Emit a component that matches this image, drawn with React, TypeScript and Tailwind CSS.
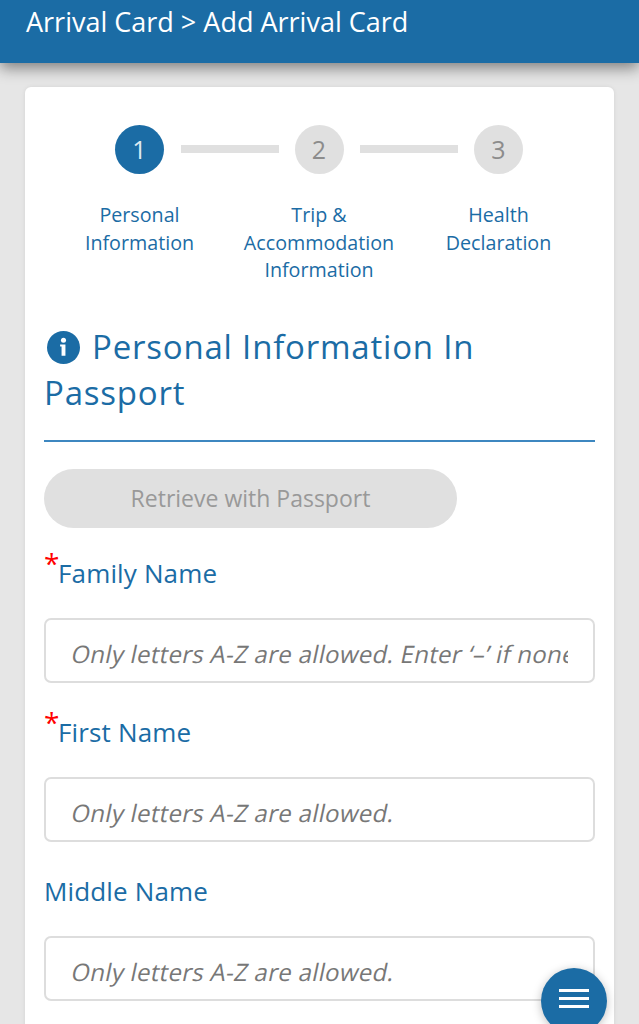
const font = { fontFamily: '"Open Sans", sans-serif' };

function Step({ n, active }: { n: number; active?: boolean }) {
  return (
    <div
      className={
        "w-[49px] h-[49px] rounded-full flex items-center justify-center text-[25px] shrink-0 " +
        (active ? "bg-[#1b6ca5] text-[#dfe9f1]" : "bg-[#e0e0e0] text-[#8c8c8c]")
      }
    >
      {n}
    </div>
  );
}

function Bar({ first }: { first?: boolean }) {
  return (
    <div
      className={
        "w-[98px] h-[8px] -mt-[2px] bg-[#e0e0e0] shrink-0 " +
        (first ? "ml-[17px] mr-[15.5px]" : "mx-[16.25px]")
      }
    />
  );
}

function Field({ label, required, hint, mt }: { label: string; required?: boolean; hint: string; mt: string }) {
  return (
    <div className={mt}>
      <div className="h-[34px] flex items-end text-[26px] leading-[34px] tracking-[0.15px] text-[#1b6ca5] relative">
        {required && (
          <span className="absolute left-0 top-[-9px] text-[28px] leading-[32px] text-[#ff0000]">*</span>
        )}
        <span className={required ? "pl-[14px]" : ""}>{label}</span>
      </div>
      <div className="mt-[28px] h-[65px] border-2 border-[#dddddd] rounded-[7px] bg-white pl-[20px] pr-[25px] pt-[6px] flex items-center">
        <div className="overflow-hidden whitespace-nowrap text-[24px] leading-[40px] text-[#777777] w-full pl-[6px]">
          <span className="inline-block -skew-x-12 tracking-[0.3px]">{hint}</span>
        </div>
      </div>
    </div>
  );
}

export default function App() {
  return (
    <div className="w-[639px] h-[1024px] overflow-hidden bg-[#e6e6e6] relative" style={font}>
      <header className="h-[63px] bg-[#1b6ca5] pl-[26px] pt-[4px] text-white text-[27px] leading-[36px] shadow-[0_5px_14px_rgba(0,0,0,0.45)] relative z-10">
        Arrival Card &gt; Add Arrival Card
      </header>

      <main className="mt-[24px] mx-[25px] bg-white rounded-[6px] h-[1000px] pt-[38px] px-[19px] shadow-[0_0_4px_rgba(0,0,0,0.08)]">
        <div className="flex items-center justify-center -ml-[1px]">
          <Step n={1} active />
          <Bar first />
          <Step n={2} />
          <Bar />
          <Step n={3} />
        </div>

        <div className="grid grid-cols-[179.5px_179.5px_179.5px] justify-center -ml-[1px] mt-[27px] text-[19.7px] leading-[27.7px] text-[#1b6ca5] text-center">
          <div className="px-2">
            Personal
            <br />
            Information
          </div>
          <div>
            Trip &amp;
            <br />
            Accommodation
            <br />
            Information
          </div>
          <div className="px-2">
            Health
            <br />
            Declaration
          </div>
        </div>

        <h2 className="mt-[40px] text-[33px] leading-[46px] text-[#1b6ca5] tracking-[0.8px] pb-[24px] border-b-2 border-[#3d87c0] font-normal">
          <svg viewBox="0 0 34 34" className="inline-block w-[33px] h-[33px] ml-[3px] mr-[12px] align-[-5px]">
            <circle cx="17" cy="17" r="17" fill="#1b6ca5" />
            <circle cx="17" cy="9.500" r="2.600" fill="#fff" />
            <path d="M13.500 14h5.500v11.500h-4v-9.500h-1.500z" fill="#fff" />
          </svg>
          Personal Information In Passport
        </h2>

        <div className="mt-[27px] w-[413px] h-[59px] rounded-full bg-[#e0e0e0] text-[#999999] text-[23px] flex items-center justify-center">
          Retrieve with Passport
        </div>

        <Field mt="mt-[28px]" required label="Family Name" hint="Only letters A-Z are allowed. Enter ‘–’ if none" />
        <Field mt="mt-[32px]" required label="First Name" hint="Only letters A-Z are allowed." />
        <Field mt="mt-[32px]" label="Middle Name" hint="Only letters A-Z are allowed." />
      </main>

      <button className="absolute left-[541px] top-[968px] w-[66px] h-[66px] rounded-full bg-[#1b6ca5] shadow-[0_2px_10px_rgba(0,0,0,0.25)] flex flex-col items-center pt-[21px] gap-[5px]">
        <span className="block w-[30px] h-[3px] bg-white" />
        <span className="block w-[30px] h-[3px] bg-white" />
        <span className="block w-[30px] h-[3px] bg-white" />
      </button>
    </div>
  );
}
